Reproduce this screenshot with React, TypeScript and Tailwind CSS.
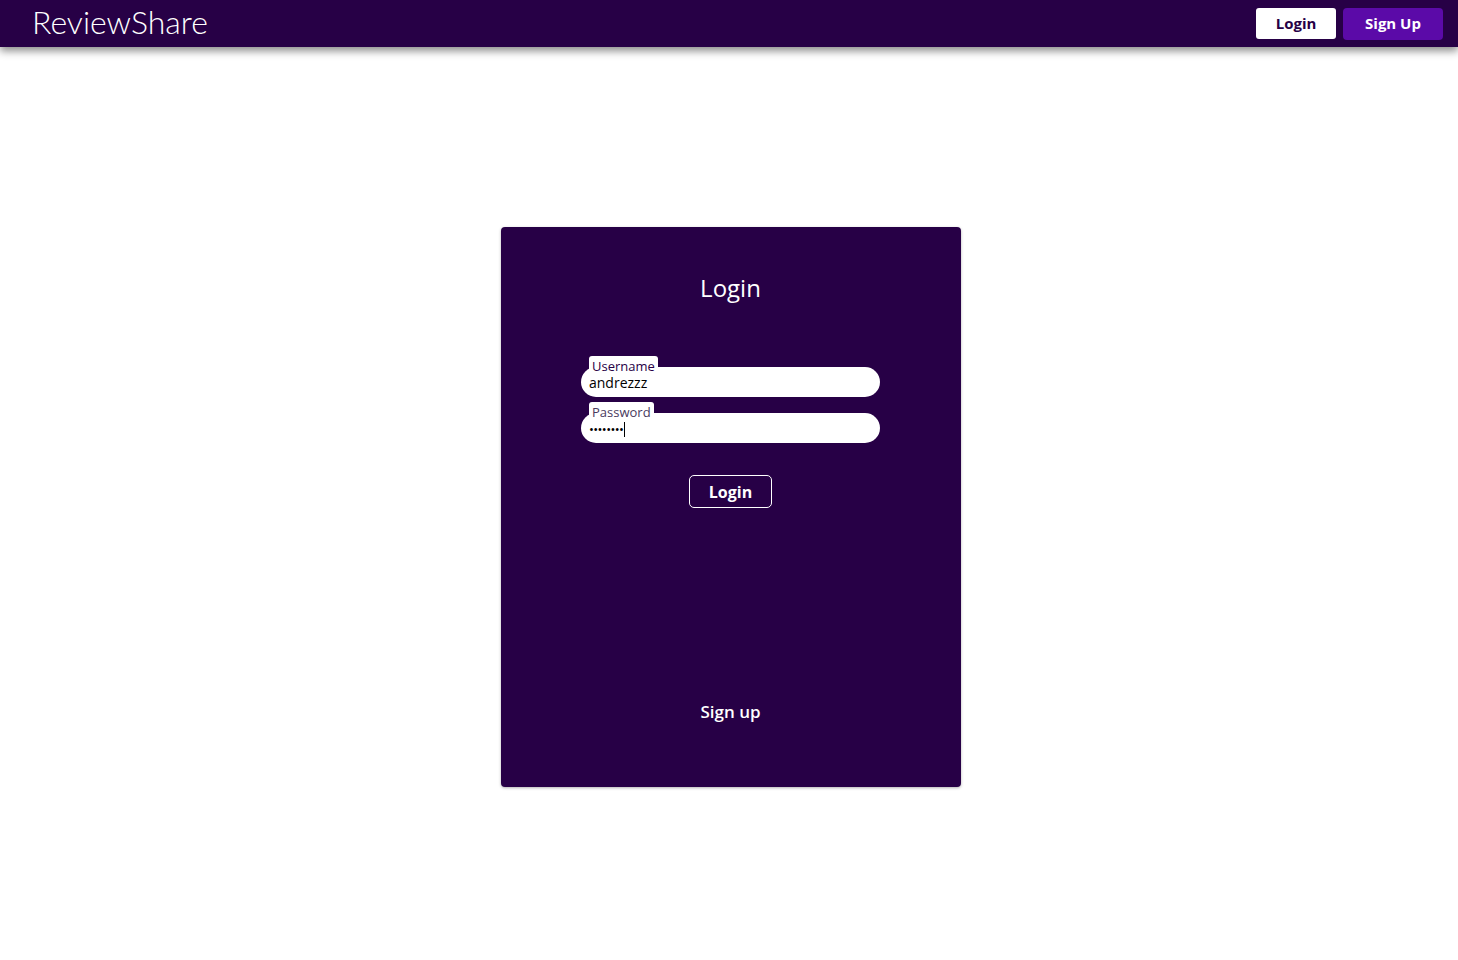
export default function App() {
  const font = { fontFamily: '"Open Sans", "Noto Sans", sans-serif' };
  return (
    <div className="min-h-[960px] bg-white" style={font}>
      <header className="h-[47px] bg-[#270046] flex items-center justify-between pl-[32px] pr-[15px] shadow-[0_4px_8px_rgba(0,0,0,0.45)] relative z-10">
        <div className="text-white text-[32px] font-light tracking-[0px] leading-none -mt-[3px]" style={{ fontFamily: '"Lato", "Open Sans", sans-serif' }}>ReviewShare</div>
        <div className="flex items-center gap-[7px]">
          <button className="w-[80px] h-[31px] bg-white rounded-[3px] text-[#270046] text-[15px] font-bold">Login</button>
          <button className="w-[100px] h-[32px] bg-[#5b0aa8] rounded-[4px] text-white text-[15px] font-bold">Sign Up</button>
        </div>
      </header>
      <div className="flex justify-center pt-[180px] pl-[3px]">
        <div className="w-[460px] h-[560px] bg-[#270046] rounded-[4px] shadow-[0_1px_3px_rgba(0,0,0,0.3)] flex flex-col items-center">
          <h1 className="text-white text-[24px] mt-[45px] leading-[32px]">Login</h1>
          <div className="mt-[63px] w-[299px] flex flex-col gap-[16px]">
            <div className="relative">
              <span className="absolute left-[8px] -top-[11px] bg-white rounded-t-[3px] px-[3px] pt-[2px] text-[13px] leading-[17px] text-[#270046]">Username</span>
              <div className="h-[30px] bg-white rounded-full flex items-center pl-[8px] pt-[1px] text-[14px] text-black">andrezzz</div>
            </div>
            <div className="relative">
              <span className="absolute left-[8px] -top-[11px] bg-white rounded-t-[3px] px-[3px] pt-[2px] text-[13px] leading-[17px] text-[#4a3a5e]">Password</span>
              <div className="h-[30px] bg-white rounded-full flex items-center pl-[8px] pt-[2px] text-black">
                <span className="text-[13px] tracking-[-0.6px] leading-none">••••••••</span>
                <span className="w-[1px] h-[15px] bg-black ml-[1px]"></span>
              </div>
            </div>
          </div>
          <button className="mt-[32px] w-[83px] h-[33px] border border-white rounded-[5px] text-white text-[16px] font-bold">Login</button>
          <div className="mt-[191px] text-white text-[17px] font-semibold">Sign up</div>
        </div>
      </div>
    </div>
  );
}
